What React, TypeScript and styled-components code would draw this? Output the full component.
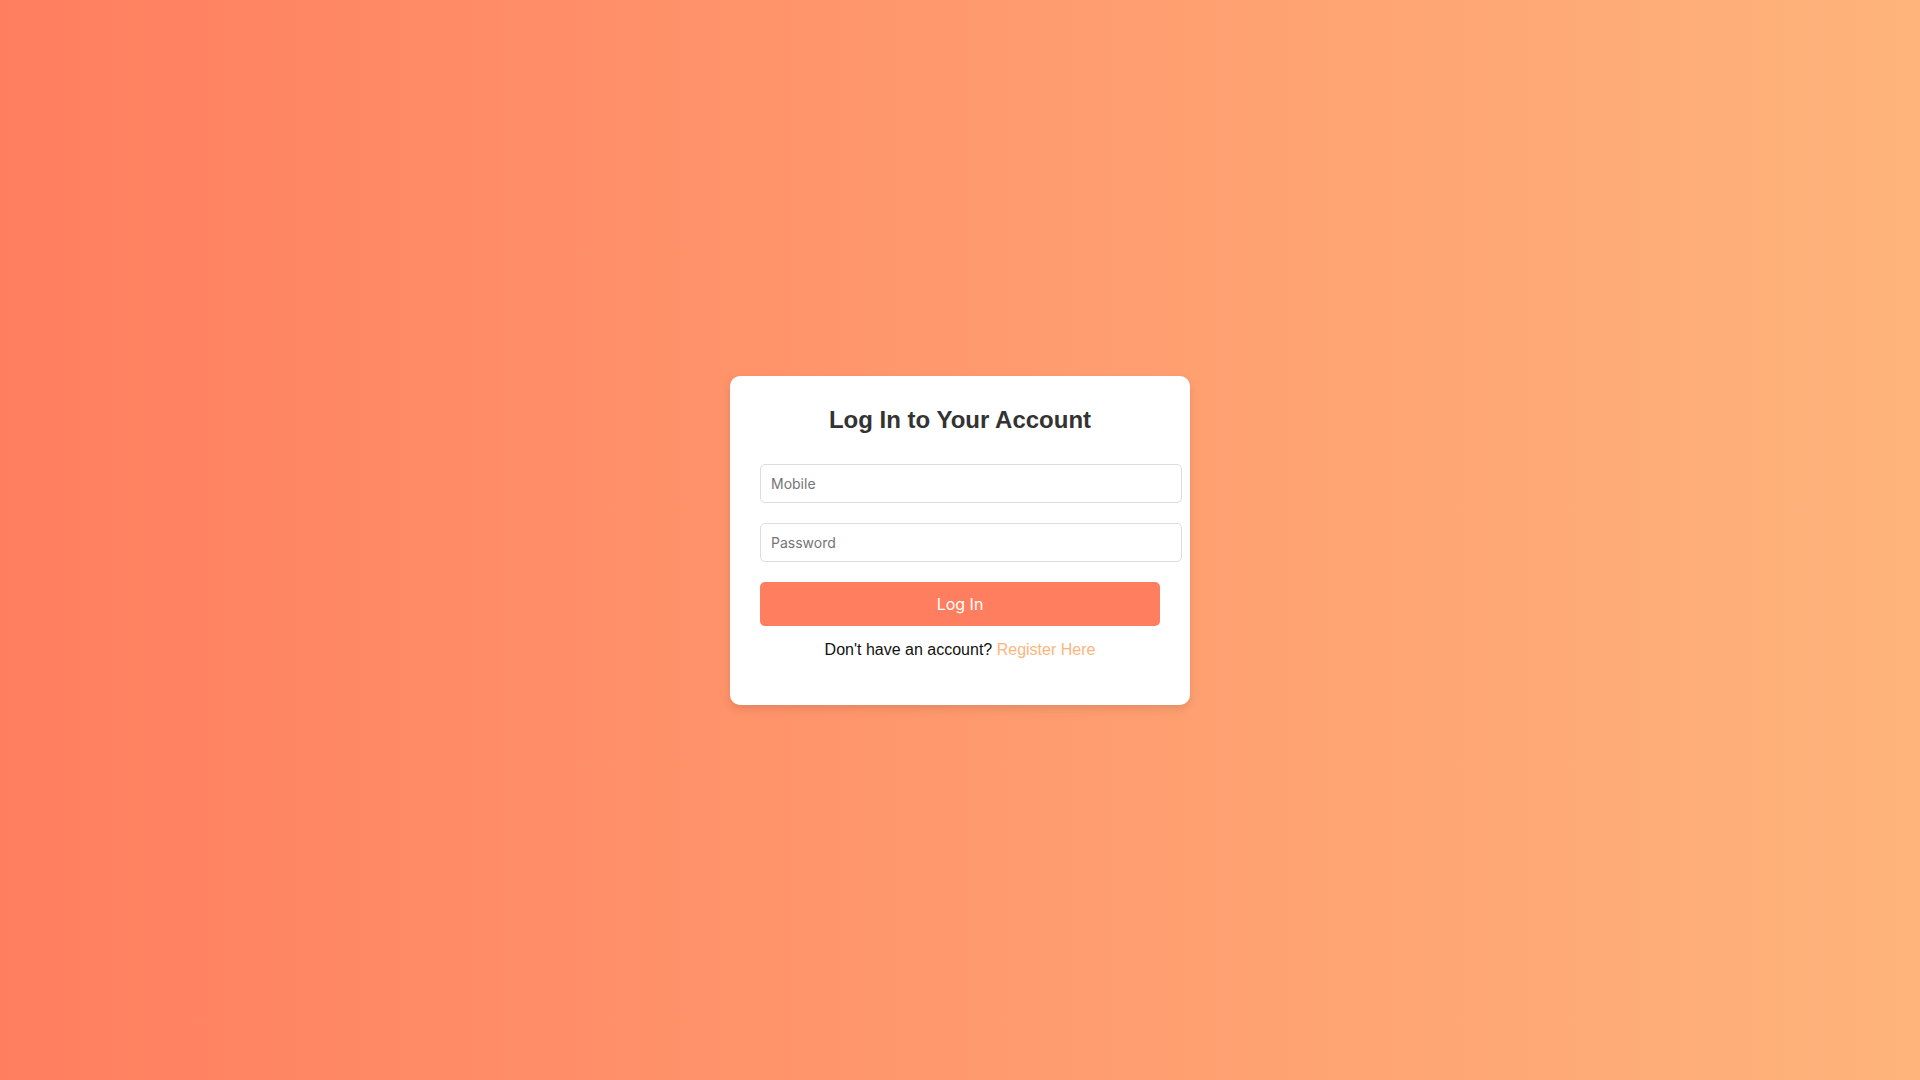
import * as React from 'react';
import styled, { createGlobalStyle } from 'styled-components';

const GlobalStyle = createGlobalStyle`
  html, body {
    margin: 0;
    padding: 0;
    height: 100%;
  }

  body {
    font-family: "Liberation Sans", Arial, sans-serif;
    background: linear-gradient(to right, #ff7e5f, #feb47b);
  }

  #root {
    height: 100%;
  }
`;

const Page = styled.div`
  height: 100vh;
  display: flex;
  align-items: center;
  justify-content: center;
`;

const Card = styled.div`
  width: 400px;
  padding: 30px;
  background: #fff;
  border-radius: 10px;
  box-shadow: 0 4px 8px rgba(0, 0, 0, 0.1);
  text-align: center;
`;

const Title = styled.h2`
  margin: 0 0 30px 0;
  font-size: 24px;
  font-weight: bold;
  color: #333;
`;

const Form = styled.form`
  display: flex;
  flex-direction: column;
  align-items: flex-start;
`;

const Input = styled.input`
  box-sizing: content-box;
  width: 100%;
  padding: 10px;
  margin-bottom: 20px;
  border: 1px solid #ddd;
  border-radius: 5px;
  font-family: Inter, "Noto Sans", sans-serif;
  font-size: 14px;
  color: #333;
  outline: none;

  ::placeholder {
    color: #757575;
  }
`;

const Button = styled.button`
  width: 100%;
  padding: 12px;
  border: none;
  border-radius: 5px;
  background: #ff7e5f;
  color: #fff;
  font-family: Inter, "Noto Sans", sans-serif;
  font-size: 16px;
  cursor: pointer;
`;

const Footer = styled.p`
  margin: 15px 0 16px 0;
  font-size: 16px;
  color: #111;
`;

const RegisterLink = styled.a`
  color: #feb47b;
  text-decoration: none;
  cursor: pointer;
`;

const App: React.FC = () => (
  <>
    <GlobalStyle />
    <Page>
      <Card>
        <Title>Log In to Your Account</Title>
        <Form onSubmit={e => e.preventDefault()}>
          <Input type="text" placeholder="Mobile" />
          <Input type="password" placeholder="Password" />
          <Button type="submit">Log In</Button>
        </Form>
        <Footer>
          Don't have an account? <RegisterLink>Register Here</RegisterLink>
        </Footer>
      </Card>
    </Page>
  </>
);

export default App;
